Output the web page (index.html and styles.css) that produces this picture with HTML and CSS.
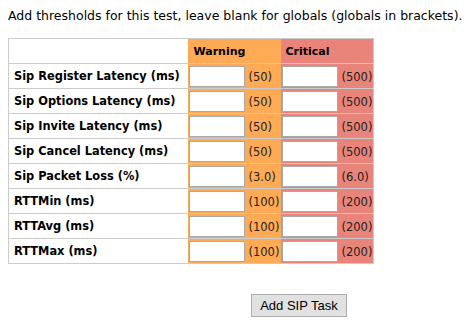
FILE: index.html
```html
<!DOCTYPE html>
<html lang="en">
<head>
    <meta charset="UTF-8">
    <title>Add SIP Task</title>
    <link rel="stylesheet" href="styles.css">
</head>
<body>
    <p class="intro">Add thresholds for this test, leave blank for globals (globals in brackets).</p>

    <table class="thresholds">
        <colgroup>
            <col class="col-label">
            <col class="col-level">
            <col class="col-level">
        </colgroup>
        <tr>
            <th class="label"></th>
            <th class="warn">Warning</th>
            <th class="crit">Critical</th>
        </tr>
        <tr>
            <td class="label">Sip Register Latency (ms)</td>
            <td class="warn"><input type="text"><span>(50)</span></td>
            <td class="crit"><input type="text"><span>(500)</span></td>
        </tr>
        <tr>
            <td class="label">Sip Options Latency (ms)</td>
            <td class="warn"><input type="text"><span>(50)</span></td>
            <td class="crit"><input type="text"><span>(500)</span></td>
        </tr>
        <tr>
            <td class="label">Sip Invite Latency (ms)</td>
            <td class="warn"><input type="text"><span>(50)</span></td>
            <td class="crit"><input type="text"><span>(500)</span></td>
        </tr>
        <tr>
            <td class="label">Sip Cancel Latency (ms)</td>
            <td class="warn"><input type="text"><span>(50)</span></td>
            <td class="crit"><input type="text"><span>(500)</span></td>
        </tr>
        <tr>
            <td class="label">Sip Packet Loss (%)</td>
            <td class="warn"><input type="text"><span>(3.0)</span></td>
            <td class="crit"><input type="text"><span>(6.0)</span></td>
        </tr>
        <tr>
            <td class="label">RTTMin (ms)</td>
            <td class="warn"><input type="text"><span>(100)</span></td>
            <td class="crit"><input type="text"><span>(200)</span></td>
        </tr>
        <tr>
            <td class="label">RTTAvg (ms)</td>
            <td class="warn"><input type="text"><span>(100)</span></td>
            <td class="crit"><input type="text"><span>(200)</span></td>
        </tr>
        <tr>
            <td class="label">RTTMax (ms)</td>
            <td class="warn"><input type="text"><span>(100)</span></td>
            <td class="crit"><input type="text"><span>(200)</span></td>
        </tr>
    </table>

    <div class="actions">
        <button type="button" class="submit">Add SIP Task</button>
    </div>
</body>
</html>
```

FILE: styles.css
```css
body {
    margin: 8px;
    font-family: 'DejaVu Sans', Verdana, sans-serif;
    font-size: 12px;
    color: #000;
    background: #fff;
}

.intro {
    margin: 0 0 15px 0;
    line-height: 15px;
    font-size: 12.5px;
    white-space: nowrap;
}

.thresholds {
    border-collapse: collapse;
    border: 1px solid #ccc;
    table-layout: fixed;
    width: 366px;
    font-size: 11.5px;
}

.col-label {
    width: 179px;
}

.col-level {
    width: 93px;
}

.thresholds th,
.thresholds td {
    height: 24px;
    padding: 0;
    border-bottom: 1px solid #ccc;
    text-align: left;
    white-space: nowrap;
    overflow: hidden;
}

.thresholds th {
    font-weight: bold;
    font-size: 11px;
    padding-left: 6px;
}

.thresholds th.crit {
    padding-left: 5px;
}

.thresholds .label {
    padding-left: 5px;
    font-weight: bold;
    font-size: 11.4px;
}

.thresholds .warn {
    background: #ffaa55;
}

.thresholds .crit {
    background: #e9847a;
}

.thresholds td.warn,
.thresholds td.crit {
    padding-left: 1px;
}

.thresholds input {
    width: 52px;
    height: 17px;
    margin: 0 4px 0 0;
    padding: 1px;
    border: 1px solid #a9a9a9;
    vertical-align: middle;
    font-size: 11px;
}

.thresholds span {
    vertical-align: middle;
    color: #222;
}

.actions {
    margin-top: 30px;
    padding-left: 243px;
}

.submit {
    font-family: 'Liberation Sans', Arial, sans-serif;
    font-size: 13px;
    width: 96px;
    height: 23px;
    background: #e1e1e1;
    border: 1px solid #adadad;
    color: #000;
    padding: 0;
}
```
